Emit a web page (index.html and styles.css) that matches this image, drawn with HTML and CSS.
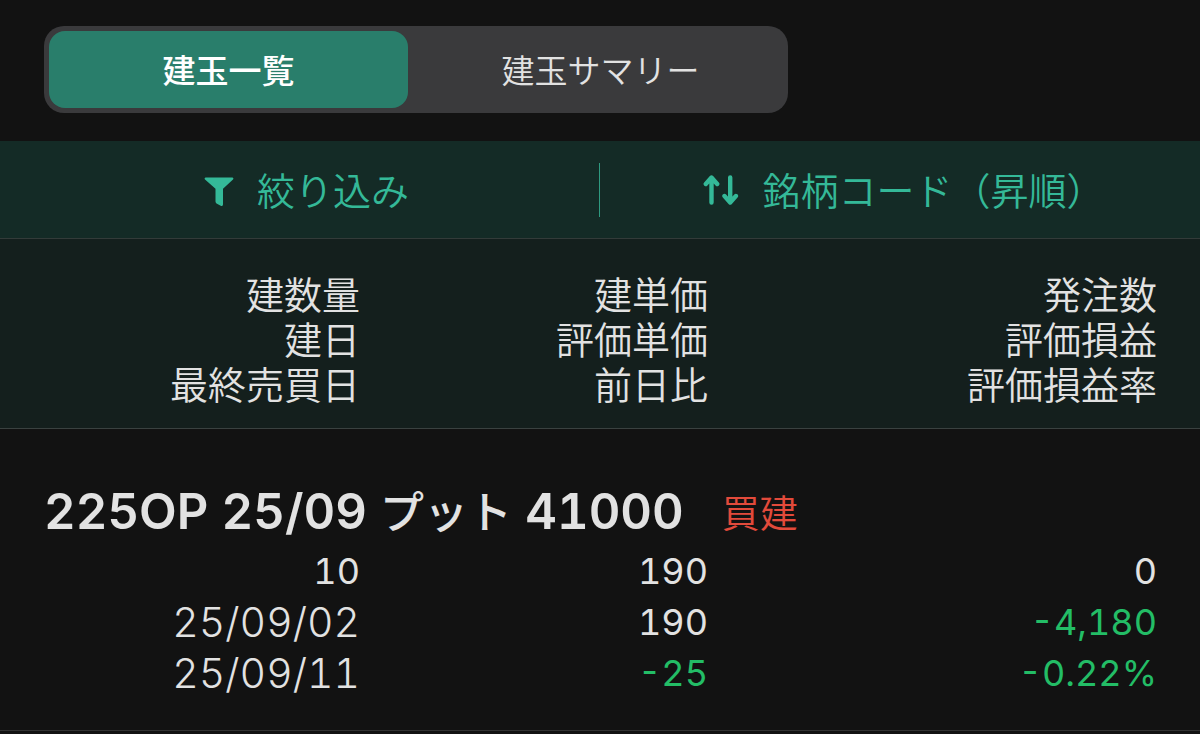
FILE: index.html
```html
<!DOCTYPE html>
<html lang="ja">
<head>
<meta charset="utf-8">
<meta name="viewport" content="width=device-width, initial-scale=1">
<title>建玉一覧</title>
<link rel="stylesheet" href="styles.css">
</head>
<body>
<nav class="tabs">
  <button type="button" class="tab tab-active">建玉一覧</button>
  <button type="button" class="tab">建玉サマリー</button>
</nav>
<div class="tools">
  <button type="button" class="tool">
    <svg class="icon" viewBox="0 0 30 36" width="30" height="36" aria-hidden="true"><path fill="currentColor" d="M1.500 7.500h27q1.500.5.500 2L19 18.800V34.500q-.2 1.800-1.800 1.500L12.500 33.500q-1-.8-1-2V18.800L1 9.500q-1-1.500.5-2z"/></svg>
    <span>絞り込み</span>
  </button>
  <button type="button" class="tool">
    <svg class="icon" viewBox="0 0 36 36" width="36" height="36" aria-hidden="true"><path fill="none" stroke="currentColor" stroke-width="4.400" stroke-linecap="round" stroke-linejoin="round" d="M8.500 32.500V8M2.800 14l5.700-6.500 5.700 6.500M27.200 7.500V32M21.500 26l5.700 6.500 5.700-6.500"/></svg>
    <span>銘柄コード（昇順）</span>
  </button>
</div>
<div class="row head">
  <div><div>建数量</div><div>建日</div><div>最終売買日</div></div>
  <div><div>建単価</div><div>評価単価</div><div>前日比</div></div>
  <div><div>発注数</div><div>評価損益</div><div>評価損益率</div></div>
</div>
<main class="position">
  <h1 class="title"><span>225OP 25/09 <span class="kana">プット</span> 41000</span><span class="side">買建</span></h1>
  <div class="row values">
    <div><div>10</div><div class="date">25/09/02</div><div class="date">25/09/11</div></div>
    <div><div>190</div><div>190</div><div class="down">-25</div></div>
    <div><div>0</div><div class="down">-4,180</div><div class="down">-0.22%</div></div>
  </div>
</main>
</body>
</html>
```
FILE: styles.css
```css
* { box-sizing: border-box; }
body {
  margin: 0;
  background: #121212;
  color: #e2e2e2;
  font-family: "Noto Sans CJK JP", sans-serif;
  font-weight: 350;
}
button { border: 0; background: none; color: inherit; font: inherit; padding: 0; }
.tabs {
  display: grid;
  grid-template-columns: 358fr 364fr;
  gap: 10px;
  width: 62%;
  margin: 26px 0 28px 44px;
  padding: 5px;
  border-radius: 20px;
  background: #3a3a3c;
}
.tab { height: 77px; padding-bottom: 2px; border-radius: 16px; font-size: 33px; }
.tab-active { background: #297e6b; color: #fff; font-weight: 500; }
.tools {
  display: grid;
  grid-template-columns: 1fr 1fr;
  background: #142b26;
  color: #34b998;
  border-bottom: 1px solid #333b39;
}
.tool {
  display: flex;
  align-items: center;
  justify-content: center;
  gap: 23px;
  height: 54px;
  margin: 22px 0 21px;
  padding: 0 0 4px 12px;
  font-size: 38px;
}
.tool:first-child { border-right: 1px solid #2f9a80; padding-left: 14px; }
.tool:last-child { padding-left: 8px; }
.icon { flex: none; }
.row {
  display: grid;
  grid-template-columns: 30% 29% 1fr;
  text-align: right;
}
.row > :last-child { padding-right: 43px; }
.head {
  padding: 31px 0 23px;
  background: #141f1d;
  border-bottom: 1px solid #3a4140;
  font-size: 38px;
  line-height: 45px;
}
.position { padding: 54px 0 31px; border-bottom: 1px solid #333; }
.title {
  display: flex;
  align-items: center;
  gap: 38px;
  margin: 0 0 4px 44px;
  font-family: Inter, "Noto Sans CJK JP", sans-serif;
  font-size: 49px;
  font-weight: 600;
  font-variant-numeric: tabular-nums;
  line-height: 58px;
}
.kana { font-size: 44px; font-weight: 500; }
.side { color: #e24a3b; font-size: 38px; font-weight: 350; }
.values {
  font-family: Inter, sans-serif;
  font-size: 36px;
  font-weight: 400;
  font-variant-numeric: tabular-nums;
  line-height: 51px;
}
.date { font-size: 41px; font-weight: 300; }
.down { color: #23bd66; }
```
